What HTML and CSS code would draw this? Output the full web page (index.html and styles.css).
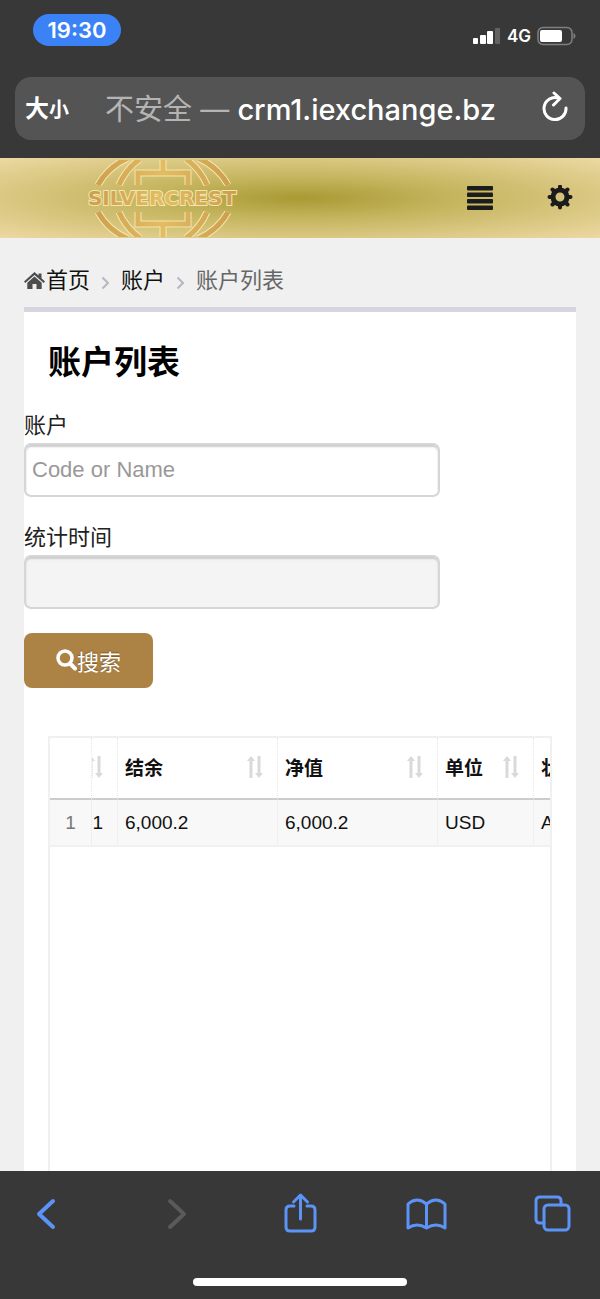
FILE: index.html
```html
<!DOCTYPE html>
<html lang="zh-CN">
<head>
    <meta charset="UTF-8">
    <meta name="viewport" content="width=device-width, initial-scale=1.0">
    <title>账户列表</title>
    <link rel="stylesheet" href="styles.css">
</head>
<body>
    <div class="browser-top">
        <div class="status-bar">
            <span class="clock">19:30</span>
            <div class="status-icons">
                <svg width="28" height="18" viewBox="0 0 28 18">
                    <rect x="0" y="11" width="5" height="6" rx="1" fill="#fff"/>
                    <rect x="7" y="8" width="6" height="9" rx="1" fill="#fff"/>
                    <rect x="14" y="4" width="6" height="13" rx="1" fill="#fff"/>
                    <rect x="22" y="1" width="5" height="16" rx="1" fill="#626262"/>
                </svg>
                <span class="network">4G</span>
                <svg width="39" height="20" viewBox="0 0 39 20">
                    <rect x="1" y="1.500" width="34" height="17" rx="5" fill="none" stroke="#808080" stroke-width="1.500"/>
                    <rect x="3" y="4" width="22" height="12" rx="2" fill="#fff"/>
                    <path d="M36.500 7q2 1 2 3t-2 3z" fill="#808080"/>
                </svg>
            </div>
        </div>
        <div class="address-bar">
            <button class="text-size">大<small>小</small></button>
            <div class="address"><span class="insecure">不安全 — </span>crm1.iexchange.bz</div>
            <button class="reload" aria-label="刷新">
                <svg width="26" height="32" viewBox="0 0 26 32" fill="none" stroke="#fff" stroke-width="3" stroke-linecap="round" stroke-linejoin="round">
                    <path d="M16 7A11 11 0 1 0 24 17"/>
                    <path d="M12 2l6 5.500-6.500 6.500"/>
                </svg>
            </button>
        </div>
    </div>

    <header class="site-header">
        <a href="#" class="logo" aria-label="Silvercrest">
            <svg width="160" height="80" viewBox="0 0 160 80">
                <defs>
                    <linearGradient id="gold" x1="0" x2="160" y1="0" y2="0" gradientUnits="userSpaceOnUse">
                        <stop offset="0" stop-color="#c99a4b"/>
                        <stop offset=".5" stop-color="#e3bd62"/>
                        <stop offset="1" stop-color="#c99a4b"/>
                    </linearGradient>
                    <clipPath id="halves">
                        <path d="M0 2h160v26H0zM0 53h160v26H0z"/>
                    </clipPath>
                    <g id="half-globe">
                        <path d="M16 27Q26 9 46 0M146 27Q136 9 116 0"/>
                        <path d="M37 27Q44 11 58 1M125 27Q118 11 104 1"/>
                        <path d="M81 0v15M56 27V15h50v12"/>
                    </g>
                    <g id="globe">
                        <use href="#half-globe"/>
                        <use href="#half-globe" transform="matrix(1 0 0 -1 0 81)"/>
                    </g>
                </defs>
                <g clip-path="url(#halves)" fill="none">
                    <use href="#globe" stroke="#f5e6b0" stroke-width="7"/>
                    <use href="#globe" stroke="url(#gold)" stroke-width="5"/>
                </g>
                <text class="logo-text" x="80" y="47" text-anchor="middle" fill="url(#gold)">SILVERCREST</text>
            </svg>
        </a>
        <div class="header-actions">
            <button aria-label="菜单">
                <svg width="26" height="26" viewBox="0 0 26 26" fill="#1c1c1c">
                    <rect y="1" width="26" height="4.500" rx="1"/>
                    <rect y="7.500" width="26" height="4.500" rx="1"/>
                    <rect y="14" width="26" height="4.500" rx="1"/>
                    <rect y="20.500" width="26" height="4.500" rx="1"/>
                </svg>
            </button>
            <button aria-label="设置">
                <svg width="26" height="26" viewBox="-13 -12 26 26">
                    <circle r="7" fill="none" stroke="#1c1c1c" stroke-width="5"/>
                    <path d="M0-8.500V-10.500M0 8.500V10.500M-8.500 0H-10.500M8.500 0H10.500M-6-6l-1.500-1.500M6-6l1.500-1.500M-6 6l-1.500 1.500M6 6l1.500 1.500" stroke="#1c1c1c" stroke-width="4" stroke-linecap="round"/>
                </svg>
            </button>
        </div>
    </header>

    <main>
        <nav class="breadcrumb">
            <svg width="22" height="20" viewBox="0 0 22 20" fill="#4d4d4d">
                <path d="M10.500 1L14.500 4.600V2.500h3v4.800L21 10.500l-1.300 1.500-9.200-8-9.200 8L0 10.500z"/>
                <path d="M10.500 5.500l7.200 6.300V18h-5.200v-5h-4v5H3.300v-6.200z"/>
            </svg>
            <a href="#">首页</a>
            <svg class="chevron" width="8" height="14" viewBox="0 0 8 14"><path d="M1.500 1.500L7 7l-5.500 5.500"/></svg>
            <a href="#">账户</a>
            <svg class="chevron" width="8" height="14" viewBox="0 0 8 14"><path d="M1.500 1.500L7 7l-5.500 5.500"/></svg>
            <span>账户列表</span>
        </nav>

        <section class="card">
            <h1>账户列表</h1>
            <form class="filters">
                <div class="field">
                    <label for="account">账户</label>
                    <input type="text" id="account" placeholder="Code or Name">
                </div>
                <div class="field">
                    <label for="period">统计时间</label>
                    <input type="text" id="period" readonly>
                </div>
                <button type="button" class="search-btn">
                    <svg width="21" height="22" viewBox="0 0 21 22" fill="none" stroke="#fff">
                        <circle cx="9" cy="9" r="7" stroke-width="3.500"/>
                        <path d="M14.500 15l4.500 4.500" stroke-width="4" stroke-linecap="round"/>
                    </svg>搜索
                </button>
            </form>

            <div class="grid">
                <table class="grid-locked">
                    <thead><tr><th></th></tr></thead>
                    <tbody><tr><td>1</td></tr></tbody>
                </table>
                <div class="grid-scroll">
                    <table>
                        <colgroup>
                            <col class="col-account">
                            <col class="col-amount">
                            <col class="col-amount">
                            <col class="col-unit">
                            <col class="col-unit">
                        </colgroup>
                        <thead>
                            <tr>
                                <th><div class="head"><svg class="sort" width="16" height="24" viewBox="0 0 16 24"><path d="M4 23V4M12 1v19"/><path d="M0 6l4-5 4 5zM8 18l4 5 4-5z"/></svg></div></th>
                                <th><div class="head">结余<svg class="sort" width="16" height="24" viewBox="0 0 16 24"><path d="M4 23V4M12 1v19"/><path d="M0 6l4-5 4 5zM8 18l4 5 4-5z"/></svg></div></th>
                                <th><div class="head">净值<svg class="sort" width="16" height="24" viewBox="0 0 16 24"><path d="M4 23V4M12 1v19"/><path d="M0 6l4-5 4 5zM8 18l4 5 4-5z"/></svg></div></th>
                                <th><div class="head">单位<svg class="sort" width="16" height="24" viewBox="0 0 16 24"><path d="M4 23V4M12 1v19"/><path d="M0 6l4-5 4 5zM8 18l4 5 4-5z"/></svg></div></th>
                                <th><div class="head">状</div></th>
                            </tr>
                        </thead>
                        <tbody>
                            <tr>
                                <td class="num">01</td>
                                <td>6,000.2</td>
                                <td>6,000.2</td>
                                <td>USD</td>
                                <td>A</td>
                            </tr>
                        </tbody>
                    </table>
                </div>
            </div>
        </section>
    </main>

    <footer class="browser-bottom">
        <div class="toolbar">
            <button aria-label="后退">
                <svg width="44" height="44" viewBox="0 0 44 44"><path d="M29 9L15 22l14 13" stroke-width="4"/></svg>
            </button>
            <button aria-label="前进" disabled>
                <svg width="44" height="44" viewBox="0 0 44 44"><path d="M19 9l14 13-14 13" stroke-width="4"/></svg>
            </button>
            <button aria-label="分享">
                <svg width="44" height="44" viewBox="0 0 44 44"><path d="M16 14h-4q-4 0-4 4v17q0 4 4 4h21q4 0 4-4V18q0-4-4-4h-4M22.500 27V3.500M15.500 10l7-7 7 7"/></svg>
            </button>
            <button aria-label="书签">
                <svg width="44" height="44" viewBox="0 0 44 44"><path d="M3 36V12q9-8 18.500 0 9.500-8 18.500 0v24q-9-6-18.500 0Q12 30 3 36zM21.500 12v24"/></svg>
            </button>
            <button aria-label="标签页">
                <svg width="44" height="44" viewBox="0 0 44 44"><path d="M12 31H8q-4 0-4-4V9q0-4 4-4h17q4 0 4 4v4"/><rect x="12" y="13" width="25" height="25" rx="4"/></svg>
            </button>
        </div>
        <div class="home-indicator"></div>
    </footer>

    <script>
        document.querySelector('.grid-scroll').scrollLeft = 14;
    </script>
</body>
</html>
```
FILE: styles.css
```css
* {
    box-sizing: border-box;
}
body {
    margin: 0;
    min-height: 100vh;
    display: flex;
    flex-direction: column;
    background: #f0f0f0;
    color: #222;
    font-family: "Liberation Sans", "Noto Sans CJK SC", sans-serif;
    font-size: 22px;
}
button {
    border: none;
    padding: 0;
    background: none;
    color: inherit;
    font: inherit;
    cursor: pointer;
}
svg {
    display: block;
    flex: none;
}
a {
    color: #111;
    text-decoration: none;
}

/* browser chrome */
.browser-top {
    background: #383838;
    color: #fff;
    padding: 14px 15px 18px;
    font-family: Inter, "Noto Sans CJK SC", sans-serif;
}
.status-bar {
    display: flex;
    justify-content: space-between;
    align-items: center;
    padding: 0 9px 0 18px;
    margin-bottom: 31px;
}
.clock {
    width: 88px;
    line-height: 32px;
    border-radius: 16px;
    background: #3b82f7;
    text-align: center;
    font-size: 22px;
    font-weight: 600;
}
.status-icons {
    display: flex;
    align-items: center;
    gap: 6px;
    padding-top: 12px;
}
.network {
    font-size: 17px;
    font-weight: 600;
    line-height: 20px;
}
.address-bar {
    display: flex;
    align-items: center;
    justify-content: space-between;
    height: 63px;
    padding: 0 17px 4px 10px;
    border-radius: 16px;
    background: #545454;
}
.text-size {
    font-size: 24px;
    font-weight: 700;
}
.text-size small {
    font-size: 20px;
}
.address {
    margin-right: 10px;
    font-size: 29px;
    font-weight: 500;
    white-space: nowrap;
}
.insecure {
    color: #b4b4b4;
    font-weight: 400;
}

/* site header */
.site-header {
    display: flex;
    justify-content: space-between;
    align-items: center;
    height: 80px;
    padding: 0 27px 0 82px;
    background: radial-gradient(ellipse at center, #a99a34 0%, #c6b660 38%, #dac883 70%, #edd9a3 100%);
}
.logo-text {
    font-family: "DejaVu Sans", sans-serif;
    font-size: 20px;
    font-weight: 700;
    stroke: #f5e6b0;
    stroke-width: 2px;
    paint-order: stroke;
}
.header-actions {
    display: flex;
    gap: 54px;
}

/* page */
main {
    flex: 1;
    display: flex;
    flex-direction: column;
    padding: 0 24px;
}
.breadcrumb {
    display: flex;
    align-items: center;
    padding: 27px 0 10px;
    line-height: 32px;
    color: #666;
}
.chevron {
    margin: 4px 12px 0 11px;
    fill: none;
    stroke: #b5b8c2;
    stroke-width: 2;
}
.card {
    flex: 1;
    display: flex;
    flex-direction: column;
    border-top: 5px solid #d4d5df;
    background: #fff;
}
h1 {
    margin: 26px 24px 23px;
    color: #000;
    font-size: 33px;
    font-weight: 700;
    line-height: 50px;
}
.field {
    display: flex;
    flex-direction: column;
    gap: 2px;
    max-width: 416px;
    margin-bottom: 26px;
    line-height: 30px;
}
.field:nth-child(2) {
    margin-bottom: 24px;
}
.field input {
    height: 54px;
    padding: 0 6px;
    border: 2px solid #d6d6d6;
    border-radius: 7px;
    background: #fff;
    box-shadow: inset 0 2px 2px #ccc;
    color: #222;
    font: inherit;
}
.field input[readonly] {
    background: #f4f4f4;
}
.field input::placeholder {
    color: #999;
}
.search-btn {
    display: flex;
    align-items: center;
    height: 55px;
    padding: 0 32px 2px;
    border-radius: 8px;
    background: #ad8345;
    color: #fff;
    text-shadow: 0 -1px 1px rgba(0, 0, 0, 0.3);
}

/* account grid */
.grid {
    flex: 1;
    display: flex;
    align-items: flex-start;
    margin: 48px 24px 0;
    border: 2px solid #f0f0f0;
    border-bottom: none;
    color: #111;
    font-size: 19px;
}
.grid table {
    border-collapse: separate;
    border-spacing: 0;
    table-layout: fixed;
}
.grid-scroll {
    flex: 1;
    min-width: 0;
    overflow: hidden;
}
.grid-scroll table {
    width: 552px;
}
.col-account {
    width: 40px;
}
.col-amount {
    width: 160px;
}
.col-unit {
    width: 96px;
}
.grid th,
.grid td {
    padding: 0 14px 0 7px;
    border-right: 1px dotted #e6e6e6;
    text-align: left;
    white-space: nowrap;
}
.grid th {
    height: 62px;
    padding-bottom: 3px;
    border-bottom: 2px solid #ccc;
    font-weight: 600;
}
.grid td {
    height: 47px;
    border-bottom: 2px solid #f0f0f0;
    background: #f8f8f8;
}
.grid .num {
    padding-left: 0;
    text-align: right;
}
.grid .grid-locked {
    width: 42px;
}
.grid .grid-locked td {
    padding: 0;
    color: #777;
    text-align: center;
}
.head {
    display: flex;
    justify-content: space-between;
    align-items: center;
}
.head .sort:only-child {
    margin-left: auto;
}
.sort path {
    fill: #d9d9d9;
}
.sort path:first-child {
    stroke: #d9d9d9;
    stroke-width: 3;
}

/* bottom toolbar */
.browser-bottom {
    background: #383838;
    padding: 21px 24px 13px;
}
.toolbar {
    display: flex;
    justify-content: space-between;
    margin-bottom: 42px;
}
.toolbar svg {
    fill: none;
    stroke: #5b93f7;
    stroke-width: 3;
    stroke-linecap: round;
    stroke-linejoin: round;
}
.toolbar button:disabled svg {
    stroke: #5a5a5a;
}
.home-indicator {
    width: 214px;
    height: 8px;
    margin: 0 auto;
    border-radius: 4px;
    background: #fff;
}
```
